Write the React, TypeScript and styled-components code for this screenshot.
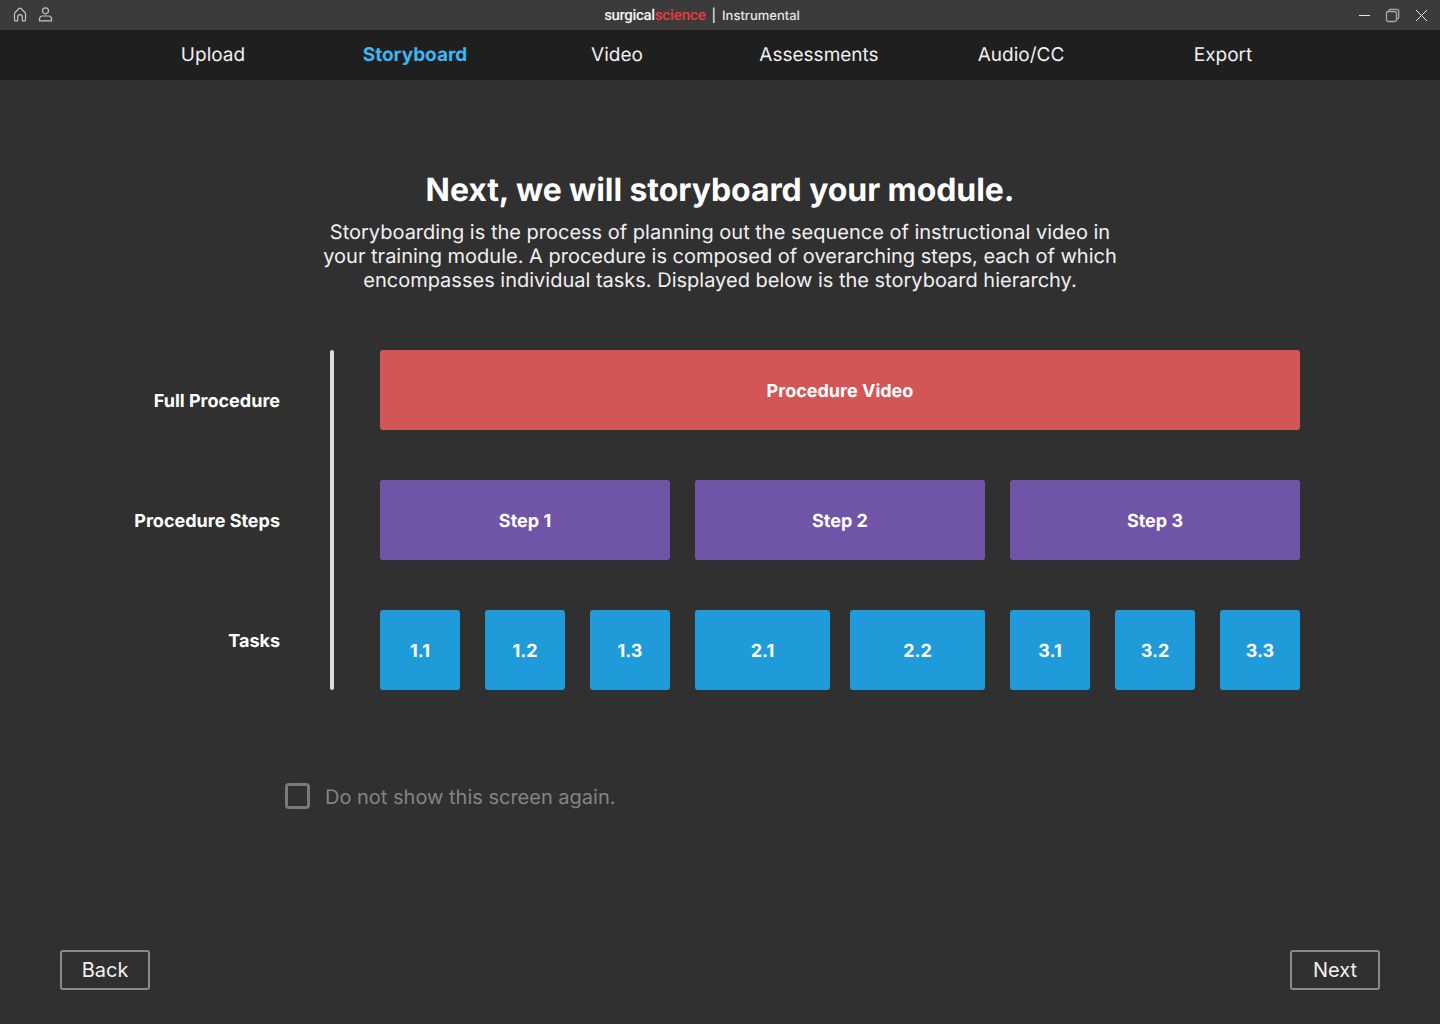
import React from "react";
import styled, { createGlobalStyle } from "styled-components";

const GlobalStyle = createGlobalStyle`
  html, body { margin: 0; padding: 0; background: #303030; }
  body {
    font-family: Inter, "Liberation Sans", sans-serif;
    color: #fff;
    text-rendering: geometricPrecision;
  }
  * { box-sizing: border-box; }
`;

const Page = styled.div`
  width: 1440px;
  height: 1024px;
  display: flex;
  flex-direction: column;
  background: #303030;
  overflow: hidden;
`;

const TitleBar = styled.header`
  height: 30px;
  flex: none;
  display: grid;
  grid-template-columns: 1fr auto 1fr;
  align-items: center;
  padding: 0 12px;
  background: #3b3b3b;
`;

const IconRow = styled.div<{ $end?: boolean }>`
  display: flex;
  align-items: center;
  justify-content: ${(p) => (p.$end ? "flex-end" : "flex-start")};
  gap: ${(p) => (p.$end ? "14px" : "9px")};
  color: #c4c4c4;
  svg { display: block; }
`;

const Brand = styled.div`
  display: flex;
  align-items: center;
  margin-left: -36px;
`;

const LogoWord = styled.span<{ $red?: boolean }>`
  font-family: "Roboto", sans-serif;
  font-size: 15px;
  font-weight: 500;
  letter-spacing: ${(p) => (p.$red ? "-0.1px" : "-0.35px")};
  color: ${(p) => (p.$red ? "#e63c3c" : "#f2f2f2")};
`;

const Product = styled.span`
  font-size: 13px;
  font-weight: 500;
  color: #e6e6e6;
  margin-left: 6px;
  padding-top: 2px;
  &::before {
    content: "|";
    margin-right: 6px;
  }
`;

const Nav = styled.nav`
  height: 50px;
  flex: none;
  display: grid;
  grid-template-columns: repeat(6, 202px);
  justify-content: center;
  align-items: center;
  padding: 0 4px 2px 0;
  background: #1f1f1f;
`;

const NavItem = styled.a<{ $active?: boolean }>`
  text-align: center;
  font-size: 19px;
  font-weight: ${(p) => (p.$active ? 700 : 400)};
  color: ${(p) => (p.$active ? "#3fb5f3" : "#f0f0f0")};
`;

const Main = styled.main`
  flex: 1;
  display: flex;
  flex-direction: column;
  align-items: center;
  padding-top: 90px;
`;

const Heading = styled.h1`
  margin: 0;
  font-size: 32px;
  line-height: 40px;
  font-weight: 700;
  letter-spacing: -0.08px;
  text-align: center;
`;

const Intro = styled.p`
  margin: 10px 0 0;
  width: 820px;
  font-size: 20px;
  line-height: 24px;
  text-align: center;
  color: #f0f0f0;
`;

const Diagram = styled.section`
  margin-top: 58px;
  width: 1440px;
  display: flex;
  height: 340px;
`;

const Labels = styled.div`
  width: 280px;
  padding-top: 42px;
  display: flex;
  flex-direction: column;
  gap: 100px;
`;

const Label = styled.div`
  height: 20px;
  line-height: 20px;
  font-size: 18px;
  font-weight: 700;
  text-align: right;
`;

const Divider = styled.div`
  width: 4px;
  margin: 0 46px 0 50px;
  border-radius: 2px;
  background: #dcdcdc;
`;

const Rows = styled.div`
  width: 920px;
  display: flex;
  flex-direction: column;
  gap: 50px;
`;

const Row = styled.div<{ $gap?: number }>`
  display: flex;
  gap: ${(p) => p.$gap ?? 25}px;
`;

const Group = styled(Row)`
  flex: 1;
`;

const Block = styled.div<{ $color: string }>`
  flex: 1;
  height: 80px;
  display: flex;
  align-items: center;
  justify-content: center;
  border-radius: 3px;
  background: ${(p) => p.$color};
  font-size: 18px;
  font-weight: 700;
  padding-top: 3px;
`;

const CheckRow = styled.label`
  margin-top: 94px;
  width: 1440px;
  padding-left: 285px;
  display: flex;
  align-items: center;
  gap: 15px;
  font-size: 20px;
  color: #848484;
`;

const Box = styled.span`
  width: 25px;
  height: 26px;
  margin-top: -1px;
  border: 3px solid #7a7a7a;
  border-radius: 4px;
`;

const Footer = styled.footer`
  margin-top: auto;
  padding: 0 60px 34px;
  display: flex;
  justify-content: space-between;
`;

const NavButton = styled.button`
  width: 90px;
  height: 40px;
  padding: 0;
  background: transparent;
  border: 2px solid #8a8a8a;
  border-radius: 3px;
  color: #f2f2f2;
  font-family: inherit;
  font-size: 20px;
`;

const RED = "#d35656";
const PURPLE = "#7054a8";
const BLUE = "#209bda";

const navItems = ["Upload", "Storyboard", "Video", "Assessments", "Audio/CC", "Export"];
const taskGroups = [
  { tasks: ["1.1", "1.2", "1.3"], gap: 25 },
  { tasks: ["2.1", "2.2"], gap: 20 },
  { tasks: ["3.1", "3.2", "3.3"], gap: 25 },
];

const HomeIcon = () => (
  <svg width="16" height="16" viewBox="0 0 16 16" fill="none" stroke="currentColor" strokeWidth="1.2" strokeLinejoin="round">
    <path d="M2.500 6.200 7 1.500a1.400 1.400 0 0 1 2 0l4.500 4.700V13a.8.8 0 0 1-.8.8H10.300V10a2.300 2.300 0 0 0-4.600 0v3.800H3.300a.8.8 0 0 1-.8-.8z" />
  </svg>
);

const UserIcon = () => (
  <svg width="16" height="16" viewBox="0 0 16 16" fill="none" stroke="currentColor" strokeWidth="1.2">
    <circle cx="8.500" cy="3.800" r="3" />
    <path d="M2.500 13.800v-1.800a3 3 0 0 1 3-3h6a3 3 0 0 1 3 3v1.800z" />
  </svg>
);

const MinimizeIcon = () => (
  <svg width="14" height="14" viewBox="0 0 14 14" fill="none" stroke="#e6e6e6" strokeWidth="1">
    <path d="M2 7.500h11" />
  </svg>
);

const RestoreIcon = () => (
  <svg width="15" height="15" viewBox="0 0 15 15" fill="none" stroke="#a8a8a8" strokeWidth="1.300">
    <rect x="1.500" y="3.500" width="10" height="10" rx="1.800" />
    <path d="M4 3.300V2.800a1.500 1.500 0 0 1 1.500-1.500h6.200a2 2 0 0 1 2 2v6.200a1.500 1.500 0 0 1-1.500 1.500h-.9" />
  </svg>
);

const CloseIcon = () => (
  <svg width="14" height="14" viewBox="0 0 14 14" fill="none" stroke="#e6e6e6" strokeWidth="1">
    <path d="M2 2l11 11M13 2 2 13" />
  </svg>
);

export default function App() {
  return (
    <Page>
      <GlobalStyle />
      <TitleBar>
        <IconRow>
          <HomeIcon />
          <UserIcon />
        </IconRow>
        <Brand>
          <LogoWord>surgical</LogoWord>
          <LogoWord $red>science</LogoWord>
          <Product>Instrumental</Product>
        </Brand>
        <IconRow $end>
          <MinimizeIcon />
          <RestoreIcon />
          <CloseIcon />
        </IconRow>
      </TitleBar>

      <Nav>
        {navItems.map((item) => (
          <NavItem key={item} $active={item === "Storyboard"}>
            {item}
          </NavItem>
        ))}
      </Nav>

      <Main>
        <Heading>Next, we will storyboard your module.</Heading>
        <Intro>
          Storyboarding is the process of planning out the sequence of instructional video in your
          training module. A procedure is composed of overarching steps, each of which encompasses
          individual tasks. Displayed below is the storyboard hierarchy.
        </Intro>

        <Diagram>
          <Labels>
            <Label>Full Procedure</Label>
            <Label>Procedure Steps</Label>
            <Label>Tasks</Label>
          </Labels>
          <Divider />
          <Rows>
            <Row>
              <Block $color={RED}>Procedure Video</Block>
            </Row>
            <Row>
              <Block $color={PURPLE}>Step 1</Block>
              <Block $color={PURPLE}>Step 2</Block>
              <Block $color={PURPLE}>Step 3</Block>
            </Row>
            <Row>
              {taskGroups.map((group) => (
                <Group key={group.tasks[0]} $gap={group.gap}>
                  {group.tasks.map((task) => (
                    <Block key={task} $color={BLUE}>
                      {task}
                    </Block>
                  ))}
                </Group>
              ))}
            </Row>
          </Rows>
        </Diagram>

        <CheckRow>
          <Box />
          Do not show this screen again.
        </CheckRow>
      </Main>

      <Footer>
        <NavButton>Back</NavButton>
        <NavButton>Next</NavButton>
      </Footer>
    </Page>
  );
}
